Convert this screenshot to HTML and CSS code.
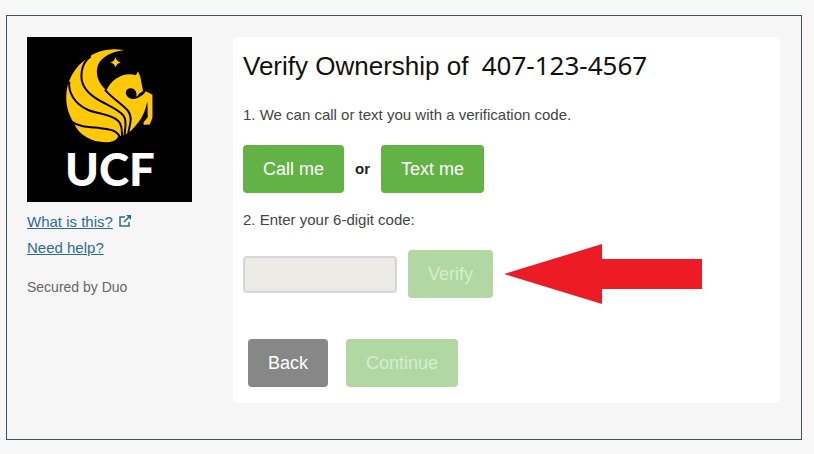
FILE: index.html
```html
<!DOCTYPE html>
<html lang="en">
<head>
    <meta charset="UTF-8">
    <meta name="viewport" content="width=device-width, initial-scale=1.0">
    <title>Verify Ownership</title>
    <link rel="stylesheet" href="styles.css">
</head>
<body>
    <div class="frame">
        <aside class="sidebar">
            <svg class="logo" viewBox="24 21 492 492" role="img" aria-label="UCF">
                <rect x="24" y="21" width="492" height="492" fill="#000"/>
                <!-- pegasus -->
                <path fill="#ffc904" d="M314 60C265 52 228 64 207 83C165 108 140 155 141 203C141 230 150 255 163 277C178 314 218 336 262 335C285 334 295 324 297 314L306 318L315 311L325 309C350 287 369 262 377 235L383 213L384 260L371 276L372 283L390 282L398 262V193L378 183C370 194 362 201 352 199L358 190L370 182L362 140L355 123L349 135C315 125 278 143 261 180C240 163 229 138 233 115C238 85 270 66 314 60Z"/>
                <path fill="#000" d="M350 198C353 182 343 173 331 174C317 176 315 191 325 200C335 209 350 208 362 198L376 187L367 190C362 196 357 199 350 198Z"/>
                <path fill="none" stroke="#000" stroke-width="6" d="M214 79C185 98 179 143 195 170C222 215 288 225 312 256C324 273 315 292 315 316M150 154C147 187 165 219 205 238C237 252 274 250 297 272C308 284 308 300 307 320M158 274C179 289 207 289 243 293C273 296 292 300 300 318M256 178C281 207 306 219 325 241C341 261 329 287 325 312"/>
                <path fill="#ffc904" d="M288 81Q291 94 303 97Q291 100 288 112Q285 100 273 97Q285 94 288 81Z"/>
                <text class="logo-text" x="271" y="466">UCF</text>
            </svg>
            <ul class="help-links">
                <li>
                    <a href="#">What is this?</a>
                    <svg class="external" viewBox="0 0 14 14" aria-hidden="true">
                        <path d="M7 3H2V12H11V8M6 8L11 3" fill="none" stroke="#2b6d96" stroke-width="1.5"/>
                        <path d="M8 1H13V6Z" fill="#2b6d96"/>
                    </svg>
                </li>
                <li><a href="#">Need help?</a></li>
            </ul>
            <p class="secured">Secured by Duo</p>
        </aside>
        <main class="panel">
            <h1>Verify Ownership of <span class="phone">407-123-4567</span></h1>
            <p class="step">1. We can call or text you with a verification code.</p>
            <div class="row send-row">
                <button type="button">Call me</button>
                <b>or</b>
                <button type="button">Text me</button>
            </div>
            <label class="step" for="code">2. Enter your 6-digit code:</label>
            <div class="row code-row">
                <input type="text" id="code" disabled>
                <button type="button" disabled>Verify</button>
                <svg class="arrow" viewBox="0 0 198 60" aria-hidden="true">
                    <path d="M0 30L98 0V15H198V45H98V60Z" fill="#ed1c24"/>
                </svg>
            </div>
            <div class="row nav-row">
                <button type="button" class="back">Back</button>
                <button type="button" disabled>Continue</button>
            </div>
        </main>
    </div>
</body>
</html>
```
FILE: styles.css
```css
* {
    box-sizing: border-box;
}

body {
    margin: 0;
    padding: 15px 12px 14px 6px;
    background-color: #f8f8f8;
    font-family: "Liberation Sans", Arial, sans-serif;
    font-size: 15px;
    line-height: 20px;
    color: #444;
}

.frame {
    display: flex;
    align-items: flex-start;
    gap: 41px;
    padding: 21px 21px 36px 20px;
    border: 1px solid #3b5568;
    background-color: #f6f6f6;
}

.sidebar {
    flex: 0 0 165px;
}

.logo {
    display: block;
    width: 100%;
}

.logo-text {
    font-family: Lato, sans-serif;
    font-size: 136px;
    font-weight: 900;
    text-anchor: middle;
    fill: white;
}

.help-links {
    margin: 7px 0 0;
    padding: 0;
    list-style-type: none;
    line-height: 26px;
}

a {
    color: #2b6d96;
}

.external {
    width: 14px;
    height: 14px;
    margin-left: 1px;
    vertical-align: -1px;
}

.secured {
    margin: 16px 0 0;
    font-size: 14px;
    color: #666;
}

.panel {
    flex: 1;
    padding: 11px 10px 16px;
    border-radius: 5px;
    background-color: white;
}

h1 {
    margin: 0;
    font-size: 26px;
    font-weight: normal;
    line-height: 34px;
    color: #111;
}

.phone {
    margin-left: 6px;
    font-family: "Noto Sans", sans-serif;
}

.step {
    display: block;
    margin: 22px 0 0;
}

.row {
    display: flex;
    align-items: center;
    gap: 11px;
}

.row b {
    color: #222;
}

.send-row {
    margin-top: 20px;
}

.send-row + .step {
    margin-top: 17px;
}

.code-row {
    margin-top: 14px;
}

.nav-row {
    gap: 18px;
    margin-top: 35px;
    padding-left: 5px;
}

button {
    padding: 14px 20px;
    border: none;
    border-radius: 4px;
    background-color: #63b246;
    color: white;
    font-family: inherit;
    font-size: 18px;
    line-height: 20px;
    cursor: pointer;
}

button:disabled {
    background-color: #b1d8a3;
    color: #d4efca;
    cursor: default;
}

.back {
    background-color: #878787;
}

input {
    width: 154px;
    height: 37px;
    padding: 0 8px;
    border: 2px solid #d6d6d6;
    border-radius: 4px;
    background-color: #ebeae5;
    font-size: 18px;
}

.arrow {
    width: 198px;
    height: 60px;
}
```
